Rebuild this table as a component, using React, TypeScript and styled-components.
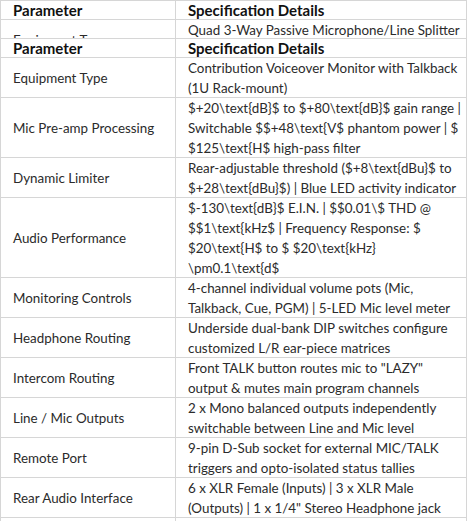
import styled, { createGlobalStyle } from "styled-components";

const GlobalStyle = createGlobalStyle`
  html, body {
    margin: 0;
    padding: 0;
    background: #ffffff;
  }
  body {
    font-family: Lato, "Noto Sans", sans-serif;
  }
`;

const Page = styled.div`
  width: 469px;
  height: 521px;
  overflow: hidden;
  background: #ffffff;
`;

const Clip = styled.div`
  height: 38px;
  overflow: hidden;
`;

const Table = styled.div`
  width: 467px;
  border-left: 1px solid #d6d6d6;
  border-right: 1px solid #d6d6d6;
  box-sizing: border-box;
  font-size: 13.4px;
  line-height: 20px;
  color: #2b2b2b;
`;

const Row = styled.div<{ $head?: boolean }>`
  display: grid;
  grid-template-columns: 175px 1fr;
  box-shadow: inset 0 -1px 0 #d6d6d6${(p) => (p.$head ? ", inset 0 1px 0 #d6d6d6" : "")};
  font-weight: ${(p) => (p.$head ? 700 : 400)};
  font-size: ${(p) => (p.$head ? "15px" : "inherit")};
  color: ${(p) => (p.$head ? "#111111" : "#2b2b2b")};
`;

const NameCell = styled.div`
  display: flex;
  align-items: center;
  padding: 0 6px 0 12px;
  white-space: nowrap;
  box-shadow: inset -1px 0 0 #d6d6d6;
`;

const SpecCell = styled.div`
  padding: 0 0 0 12px;
  white-space: nowrap;
`;

const Line = styled.div``;

interface Spec {
  name: string;
  lines: string[];
}

const specs: Spec[] = [
  { name: "Equipment Type", lines: ["Contribution Voiceover Monitor with Talkback", "(1U Rack-mount)"] },
  {
    name: "Mic Pre-amp Processing",
    lines: [
      "$+20\\text{dB}$ to $+80\\text{dB}$ gain range |",
      "Switchable $$+48\\text{V$ phantom power | $",
      "$125\\text{H$ high-pass filter",
    ],
  },
  {
    name: "Dynamic Limiter",
    lines: ["Rear-adjustable threshold ($+8\\text{dBu}$ to", "$+28\\text{dBu}$) | Blue LED activity indicator"],
  },
  {
    name: "Audio Performance",
    lines: [
      "$-130\\text{dB}$ E.I.N. | $$0.01\\$ THD @",
      "$$1\\text{kHz$ | Frequency Response: $",
      "$20\\text{H$ to $ $20\\text{kHz}",
      "\\pm0.1\\text{d$",
    ],
  },
  {
    name: "Monitoring Controls",
    lines: ["4-channel individual volume pots (Mic,", "Talkback, Cue, PGM) | 5-LED Mic level meter"],
  },
  {
    name: "Headphone Routing",
    lines: ["Underside dual-bank DIP switches configure", "customized L/R ear-piece matrices"],
  },
  {
    name: "Intercom Routing",
    lines: ['Front TALK button routes mic to "LAZY"', "output & mutes main program channels"],
  },
  {
    name: "Line / Mic Outputs",
    lines: ["2 x Mono balanced outputs independently", "switchable between Line and Mic level"],
  },
  {
    name: "Remote Port",
    lines: ["9-pin D-Sub socket for external MIC/TALK", "triggers and opto-isolated status tallies"],
  },
  {
    name: "Rear Audio Interface",
    lines: ["6 x XLR Female (Inputs) | 3 x XLR Male", '(Outputs) | 1 x 1/4" Stereo Headphone jack'],
  },
  { name: "Power Supply", lines: ["External 12V DC locking adapter"] },
];

function HeadRow() {
  return (
    <Row $head>
      <NameCell>Parameter</NameCell>
      <SpecCell>Specification Details</SpecCell>
    </Row>
  );
}

function SpecRow({ spec }: { spec: Spec }) {
  return (
    <Row>
      <NameCell>{spec.name}</NameCell>
      <SpecCell>
        {spec.lines.map((l) => (
          <Line key={l}>{l}</Line>
        ))}
      </SpecCell>
    </Row>
  );
}

function App() {
  return (
    <Page>
      <GlobalStyle />
      <Clip>
        <Table>
          <HeadRow />
          <SpecRow spec={{ name: "Equipment Type", lines: ["Quad 3-Way Passive Microphone/Line Splitter", "(4-channel, 1U)"] }} />
        </Table>
      </Clip>
      <Table>
        <HeadRow />
        {specs.map((s) => (
          <SpecRow key={s.name} spec={s} />
        ))}
      </Table>
    </Page>
  );
}

export default App;
